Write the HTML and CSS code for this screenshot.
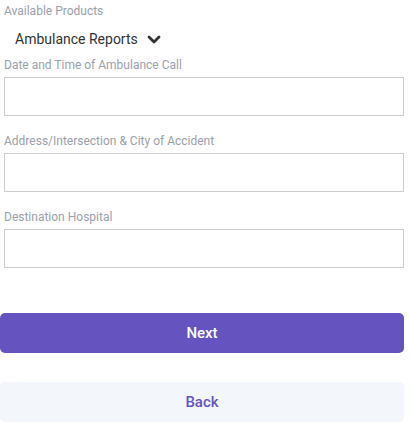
FILE: index.html
```html
<!DOCTYPE html>
<html>
<head>
<meta charset="utf-8">
<link rel="stylesheet" href="styles.css">
</head>
<body>
<div class="page">
  <div class="products">
    <div class="label products-label">Available Products</div>
    <div class="select">
      <span class="select-text">Ambulance Reports</span>
      <svg class="chevron" width="14" height="10" viewBox="0 0 14 10"><path d="M2 2 L7 7 L12 2" fill="none" stroke="#333" stroke-width="2.8" stroke-linecap="round" stroke-linejoin="round"/></svg>
    </div>
  </div>
  <div class="field first">
    <div class="label">Date and Time of Ambulance Call</div>
    <div class="input"></div>
  </div>
  <div class="field">
    <div class="label">Address/Intersection &amp; City of Accident</div>
    <div class="input"></div>
  </div>
  <div class="field">
    <div class="label">Destination Hospital</div>
    <div class="input"></div>
  </div>
  <div class="actions">
    <button class="btn btn-next">Next</button>
    <button class="btn btn-back">Back</button>
  </div>
</div>
</body>
</html>
```
FILE: styles.css
```css
html, body {
  margin: 0;
  padding: 0;
  background: #fff;
}
body {
  font-family: Roboto, "Liberation Sans", sans-serif;
}
.page {
  width: 404px;
  display: flex;
  flex-direction: column;
}
.label {
  font-size: 12px;
  line-height: 16px;
  color: #9aa1ab;
  margin-left: 4px;
}
.products-label {
  margin-top: 3px;
}
.select {
  display: flex;
  align-items: center;
  height: 24px;
  margin-top: 8px;
  padding-left: 15px;
}
.select-text {
  font-size: 14px;
  color: #333;
}
.chevron {
  margin-left: 9px;
  margin-top: 1px;
}
.field {
  display: flex;
  flex-direction: column;
  margin-top: 17px;
}
.field.first {
  margin-top: 6px;
}
.input {
  margin-top: 4px;
  margin-left: 4px;
  height: 37px;
  border: 1px solid #cccccc;
}
.actions {
  display: flex;
  flex-direction: column;
  margin-top: 45px;
  gap: 29px;
}
.btn {
  display: block;
  width: 404px;
  height: 40px;
  border: none;
  border-radius: 5px;
  font-family: Roboto, "Liberation Sans", sans-serif;
  font-size: 15px;
  font-weight: 500;
  padding: 0;
}
.btn-next {
  background: #6554c0;
  color: #fff;
}
.btn-back {
  background: #f3f6fb;
  color: #6554c0;
}
```
